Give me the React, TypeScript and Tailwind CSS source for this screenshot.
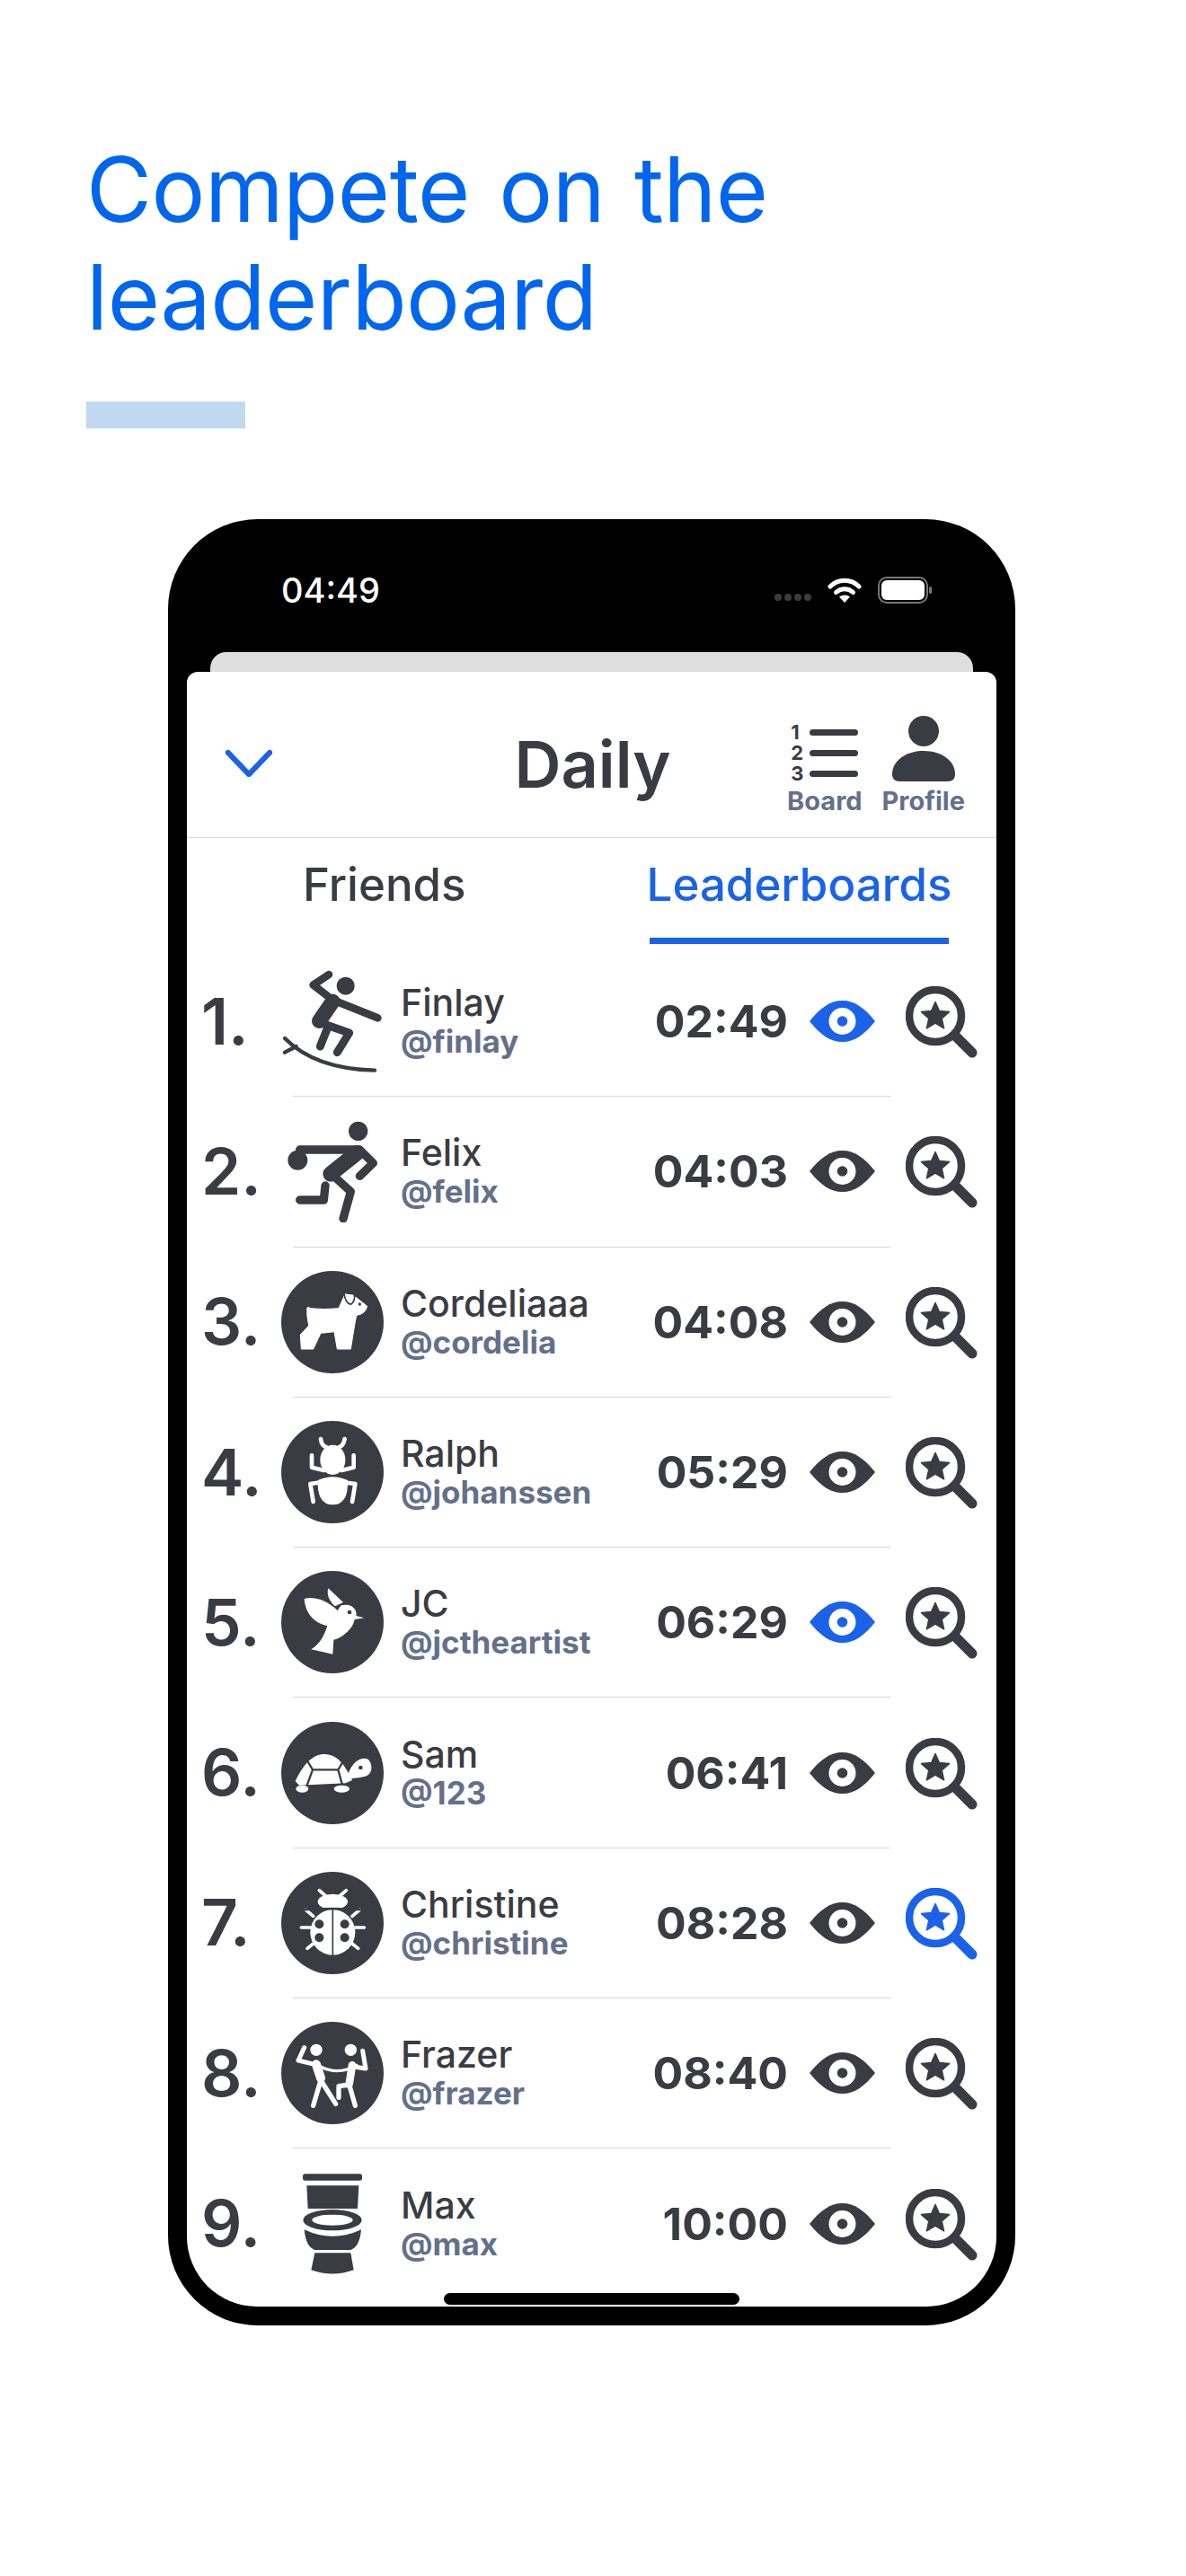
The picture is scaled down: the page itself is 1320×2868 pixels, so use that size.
import type { ReactNode } from "react";

const DARK = "#3a3c44";
const BLUE = "#1a62e8";

function Glyph({ children }: { children: ReactNode }) {
  return (
    <svg viewBox="0 0 342 342" className="w-[114px] h-[114px]" fill="none" strokeLinecap="round" strokeLinejoin="round">
      {children}
    </svg>
  );
}

function Badge({ children }: { children: ReactNode }) {
  return (
    <Glyph>
      <circle cx="171" cy="171" r="171" fill={DARK} />
      {children}
    </Glyph>
  );
}

const Surfer = () => (
  <Glyph>
    <g stroke={DARK}>
      <circle cx="215" cy="53" r="30" fill={DARK} stroke="none" />
      <path d="M159 15 107 50 172 100 322 160" strokeWidth="26" />
      <path d="M172 105 127 170" strokeWidth="50" />
      <path d="M127 175 227 210 187 275M152 200 130 255" strokeWidth="27" />
      <path d="M12 228Q112 330 312 335" strokeWidth="13" />
      <path d="M12 275 50 255" strokeWidth="13" />
    </g>
  </Glyph>
);

const Runner = () => (
  <Glyph>
    <g stroke={DARK}>
      <circle cx="257" cy="37" r="32" fill={DARK} stroke="none" />
      <circle cx="55" cy="134" r="33" fill={DARK} stroke="none" />
      <path d="M62 99H262L307 144 262 187" strokeWidth="28" />
      <path d="M252 110 165 180" strokeWidth="52" />
      <path d="M172 184 232 239 207 329M147 219 142 267H62" strokeWidth="28" />
    </g>
  </Glyph>
);

const Dog = () => (
  <Badge>
    <path
      d="M87 123Q92 118 96 125Q145 130 192 125L212 80Q240 80 252 90L287 118Q280 145 252 148L247 168 232 261H187L177 203 132 208 107 261H67L64 213 92 183 87 153Z"
      fill="#fff"
      stroke="#fff"
      strokeWidth="3"
    />
    <path d="M210 76Q214 106 232 112Q248 100 244 80" stroke={DARK} strokeWidth="5" fill="#fff" />
    <circle cx="262" cy="111" r="5" fill={DARK} />
  </Badge>
);

const Beetle = () => (
  <Badge>
    <g stroke="#fff" strokeWidth="14">
      <path d="M132 60Q135 85 152 88M212 60Q207 85 192 88" />
      <path d="M102 115V155L142 165M242 115V155L202 165" />
      <path d="M107 270 97 210 132 205M237 270 247 210 207 205" />
    </g>
    <ellipse cx="172" cy="130" rx="42" ry="50" fill="#fff" />
    <path d="M122 198Q172 175 222 198Q225 280 172 280Q119 280 122 198Z" fill="#fff" />
  </Badge>
);

const Bird = () => (
  <Badge>
    <g fill="#fff">
      <path d="M77 93C120 80 170 110 195 140L165 185C110 180 80 140 77 93Z" />
      <path d="M157 58 207 105 180 118C165 105 150 85 157 58Z" />
      <path d="M200 115C240 105 255 135 250 150L277 157 245 162C240 195 200 225 175 230L172 278 100 262C135 240 145 210 155 180Z" />
    </g>
    <circle cx="228" cy="138" r="7" fill={DARK} />
  </Badge>
);

const Turtle = () => (
  <Badge>
    <path d="M47 198C75 140 105 108 145 108C190 108 215 150 237 195L215 205 60 212Z" fill="#fff" />
    <path d="M90 135 105 160H190L205 135M105 160 85 215M190 160 205 215" stroke={DARK} strokeWidth="7" />
    <path d="M225 170C240 130 270 115 290 125C305 140 305 165 290 178C270 190 245 185 228 192Z" fill="#fff" />
    <circle cx="265" cy="153" r="7" fill={DARK} />
    <ellipse cx="70" cy="224" rx="21" ry="12" fill="#fff" />
    <ellipse cx="202" cy="224" rx="26" ry="12" fill="#fff" />
  </Badge>
);

const Ladybug = () => (
  <Badge>
    <g stroke="#fff" strokeWidth="11">
      <path d="M127 62 152 84M217 62 192 84" />
      <path d="M82 127 107 148M67 186H97M87 256 107 240M262 127 237 148M277 186H247M257 256 237 240" />
    </g>
    <ellipse cx="172" cy="100" rx="50" ry="26" fill="#fff" />
    <ellipse cx="172" cy="202" rx="75" ry="76" fill="#fff" />
    <path d="M60 128Q172 118 284 128" stroke={DARK} strokeWidth="7" />
    <path d="M172 125V285" stroke={DARK} strokeWidth="5" />
    <g fill={DARK}>
      <circle cx="127" cy="175" r="15" />
      <circle cx="127" cy="220" r="15" />
      <circle cx="212" cy="175" r="15" />
      <circle cx="212" cy="220" r="15" />
    </g>
  </Badge>
);

const Dancers = () => (
  <Badge>
    <circle cx="117" cy="94" r="20" fill="#fff" />
    <circle cx="232" cy="94" r="20" fill="#fff" />
    <g stroke="#fff">
      <path d="M77 86 57 129 102 140M272 97 282 156 242 150" strokeWidth="15" />
      <path d="M117 142 132 188" strokeWidth="30" />
      <path d="M237 145 227 208" strokeWidth="26" />
      <path d="M132 150Q190 180 252 145" strokeWidth="10" />
      <path d="M132 195 107 280M132 195 182 274" strokeWidth="16" />
      <path d="M227 210 192 215V253M227 210 247 280" strokeWidth="16" />
    </g>
  </Badge>
);

const Toilet = () => (
  <Glyph>
    <g fill={DARK}>
      <rect x="72" y="4" width="198" height="22" rx="8" />
      <path d="M85 43H259L255 120H89Z" />
      <ellipse cx="171" cy="158" rx="98" ry="35" />
      <path d="M77 190Q171 235 267 190Q262 248 232 258H112Q82 248 77 190Z" />
      <path d="M112 268H232L242 325Q171 350 100 325Z" />
    </g>
    <ellipse cx="171" cy="158" rx="68" ry="18" fill="#fff" />
  </Glyph>
);

function Eye({ color }: { color: string }) {
  return (
    <svg viewBox="0 0 73 46" className="w-[73px] h-[46px]">
      <path d="M0 23C12 8 23 0 36.5 0S61 8 73 23C61 38 50 46 36.5 46S12 38 0 23Z" fill={color} />
      <circle cx="36.5" cy="23" r="15" fill="#fff" />
      <circle cx="36.5" cy="23" r="5.8" fill={color} />
    </svg>
  );
}

function StarLens({ color }: { color: string }) {
  return (
    <svg viewBox="0 0 80 80" className="w-[80px] h-[80px]" fill="none">
      <circle cx="33" cy="33" r="29" stroke={color} strokeWidth="8.5" />
      <path d="M56 56 74 74" stroke={color} strokeWidth="11" strokeLinecap="round" />
      <path
        d="M33 17.5 37.4 27.6 48.5 28.6 40.2 36 42.6 46.8 33 41.2 23.4 46.8 25.8 36 17.5 28.6 28.6 27.6Z"
        fill={color}
        stroke={color}
        strokeWidth="1.5"
        strokeLinejoin="round"
      />
    </svg>
  );
}

const players = [
  { rank: "1.", name: "Finlay", handle: "@finlay", time: "02:49", icon: <Surfer />, eye: BLUE, lens: DARK },
  { rank: "2.", name: "Felix", handle: "@felix", time: "04:03", icon: <Runner />, eye: DARK, lens: DARK },
  { rank: "3.", name: "Cordeliaaa", handle: "@cordelia", time: "04:08", icon: <Dog />, eye: DARK, lens: DARK },
  { rank: "4.", name: "Ralph", handle: "@johanssen", time: "05:29", icon: <Beetle />, eye: DARK, lens: DARK },
  { rank: "5.", name: "JC", handle: "@jctheartist", time: "06:29", icon: <Bird />, eye: BLUE, lens: DARK },
  { rank: "6.", name: "Sam", handle: "@123", time: "06:41", icon: <Turtle />, eye: DARK, lens: DARK },
  { rank: "7.", name: "Christine", handle: "@christine", time: "08:28", icon: <Ladybug />, eye: DARK, lens: BLUE },
  { rank: "8.", name: "Frazer", handle: "@frazer", time: "08:40", icon: <Dancers />, eye: DARK, lens: DARK },
  { rank: "9.", name: "Max", handle: "@max", time: "10:00", icon: <Toilet />, eye: DARK, lens: DARK },
];

export default function App() {
  return (
    <div className="w-[1320px] h-[2868px] bg-white overflow-hidden font-['Inter',sans-serif]">
      {/* Headline */}
      <div className="pt-[151px] pl-[96px]">
        <h1 className="text-[100px] leading-[120px] font-normal tracking-[-0.5px] [word-spacing:5px] text-[#0066ee]">
          Compete on the
          <br />
          leaderboard
        </h1>
        <div className="mt-[56px] w-[177px] h-[30px] bg-[#c1d8f1]" />
      </div>

      {/* Phone */}
      <div className="relative mt-[101px] ml-[187px] w-[943px] h-[2011px] bg-black rounded-[100px] overflow-hidden px-[21px] pb-[21px] flex flex-col">
        <div className="h-[148px] shrink-0 flex items-start pt-[59px] pl-[105px] pr-[70px] justify-between">
          <span className="text-[38px] leading-[40px] font-medium text-white">04:49</span>
          <div className="flex items-center gap-[18px] h-[40px]">
            <div className="flex gap-[3px] mt-[16px]">
              <span className="w-[8px] h-[8px] rounded-full bg-[#3c3c3c]" />
              <span className="w-[8px] h-[8px] rounded-full bg-[#3c3c3c]" />
              <span className="w-[8px] h-[8px] rounded-full bg-[#3c3c3c]" />
              <span className="w-[8px] h-[8px] rounded-full bg-[#3c3c3c]" />
            </div>
            <svg viewBox="0 0 38 30" className="w-[38px] h-[30px]" fill="none" stroke="#fff" strokeLinecap="round">
              <path d="M3 11C12 2 26 2 35 11" strokeWidth="5" />
              <path d="M9.5 17.5C15 12.5 23 12.5 28.5 17.5" strokeWidth="5" />
              <path d="M19 29 13 22.5C16.5 19.8 21.5 19.8 25 22.5Z" fill="#fff" stroke="none" />
            </svg>
            <svg viewBox="0 0 62 30" className="w-[62px] h-[30px]">
              <rect x="1" y="1" width="54" height="28" rx="9" fill="none" stroke="#777" strokeWidth="2" />
              <rect x="4" y="4" width="48" height="22" rx="6" fill="#fff" />
              <rect x="57" y="11" width="3" height="8" rx="1.5" fill="#777" />
            </svg>
          </div>
        </div>
        <div className="mx-[26px] h-[22px] shrink-0 bg-[#dedede] rounded-t-[18px]" />

        {/* Sheet */}
        <div className="flex-1 min-h-0 bg-white rounded-t-[12px] rounded-b-[78px] overflow-hidden text-[#3a3c44]">
          <div className="h-[185px] border-b border-[#dcdcdc] flex items-center pl-[41px] pr-[35px]">
            <div className="flex-1 pt-[20px]">
              <svg viewBox="0 0 56 32" className="ml-[2px] w-[52px] h-[30px]" fill="none" stroke="#1a62e8" strokeWidth="6.5" strokeLinecap="round" strokeLinejoin="round">
                <path d="M3 3 28 29 53 3" />
              </svg>
            </div>
            <div className="text-[72px] leading-none font-semibold pt-[22px] -ml-[2px] mr-[2px]">Daily</div>
            <div className="flex-1 flex justify-end items-end gap-[22px] pt-[28px] pb-[4px]">
              <div className="flex flex-col items-center">
                <div className="flex items-center gap-[7px]">
                  <div className="flex flex-col text-[22px] leading-[23px] font-bold">
                    <span>1</span>
                    <span>2</span>
                    <span>3</span>
                  </div>
                  <div className="flex flex-col gap-[16px]">
                    <div className="w-[54px] h-[7px] rounded-full bg-[#3a3c44]" />
                    <div className="w-[54px] h-[7px] rounded-full bg-[#3a3c44]" />
                    <div className="w-[54px] h-[7px] rounded-full bg-[#3a3c44]" />
                  </div>
                </div>
                <span className="mt-[3px] text-[29px] leading-[32px] font-bold text-[#64708a]">Board</span>
              </div>
              <div className="flex flex-col items-center">
                <svg viewBox="0 0 70 73" className="w-[70px] h-[73px]" fill="#3a3c44">
                  <ellipse cx="35" cy="17" rx="17" ry="17" />
                  <path d="M0 65C0 50 15 39 35 39S70 50 70 65C70 70 67 73 62 73H8C3 73 0 70 0 65Z" />
                </svg>
                <span className="mt-[6px] text-[29px] leading-[32px] font-bold text-[#64708a]">Profile</span>
              </div>
            </div>
          </div>

          <div className="h-[118px] flex text-[51px] font-medium">
            <div className="ml-[129px] h-[104px] flex items-center">Friends</div>
            <div className="ml-auto mr-[53px] w-[333px] h-[118px] pb-[7px] border-b-[7px] border-[#1a62e8] text-[#1a62e8] flex items-center justify-center">
              Leaderboards
            </div>
          </div>

          <div className="pt-[3px]">
            {players.map((p, index) => (
              <div key={p.rank}>
                <div className="h-[166.3px] flex items-center pl-[16px] pr-[21px]">
                  <div className="w-[89px] text-[71px] leading-none font-semibold">{p.rank}</div>
                  <div className="w-[114px] h-[114px] shrink-0">{p.icon}</div>
                  <div className="ml-[19px] flex flex-col">
                    <span className="text-[41px] leading-[45px] font-medium">{p.name}</span>
                    <span className="text-[35px] leading-[41px] font-bold text-[#64708a]">{p.handle}</span>
                  </div>
                  <div className="flex-1 text-right text-[50px] leading-none font-bold">{p.time}</div>
                  <div className="ml-[24px] shrink-0">
                    <Eye color={p.eye} />
                  </div>
                  <div className="ml-[34px] shrink-0 h-[80px] mt-[2px]">
                    <StarLens color={p.lens} />
                  </div>
                </div>
                {index < players.length - 1 && <div className="ml-[118px] w-[665px] h-px bg-[#d9d9d9]" />}
              </div>
            ))}
          </div>
        </div>

        <div className="absolute left-[307px] bottom-[23px] w-[329px] h-[13px] rounded-full bg-black" />
      </div>
    </div>
  );
}
